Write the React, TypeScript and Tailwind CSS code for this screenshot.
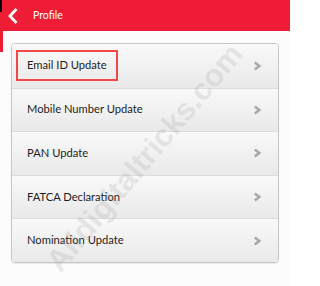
import React from "react";

const items = [
  "Email ID Update",
  "Mobile Number Update",
  "PAN Update",
  "FATCA Declaration",
  "Nomination Update",
];

function Chevron() {
  return (
    <svg width="9" height="10" viewBox="0 0 9 10" className="shrink-0">
      <path d="M1.8 1.5 L6.3 5 L1.8 8.5" fill="none" stroke="#a9a9a9" strokeWidth="2.6" strokeLinejoin="miter" />
    </svg>
  );
}

export default function App() {
  return (
    <div className="relative w-[290px] h-[286px] overflow-hidden bg-[#fcfcfc]" style={{ fontFamily: 'Lato, "Noto Sans", sans-serif' }}>
      {/* header */}
      <div className="relative h-[31px] bg-[#ee1c34] flex items-center">
        <div className="absolute left-0 top-0 w-[2px] h-[12px] bg-black" />
        <svg width="14" height="18" viewBox="0 0 14 18" className="ml-[6px]">
          <path d="M10.5 2 L4 9 L10.5 16" fill="none" stroke="#fff" strokeWidth="2.8" />
        </svg>
        <span className="ml-[13px] text-[10.5px] text-white leading-none">Profile</span>
      </div>
      <div className="absolute left-0 top-[31px] w-[3px] h-[21px] bg-[#ee1c34]" />

      {/* card */}
      <div className="mt-[12px] ml-[11px] w-[268px] rounded-[4px] border border-[#c6c6c6] overflow-hidden shadow-[0_1px_1px_rgba(0,0,0,0.08)]">
        {items.map((t, i) => (
          <div
            key={t}
            className={`h-[43.6px] flex items-center justify-between pl-[15px] pr-[16px] bg-gradient-to-b from-[#f9f9f9] to-[#e9e9e9] ${i > 0 ? "border-t border-[#dcdcdc]" : ""}`}
          >
            <span className="text-[11.2px] text-[#1e1e1e]">{t}</span>
            <Chevron />
          </div>
        ))}
      </div>

      {/* annotation box */}
      <div className="absolute left-[16px] top-[50px] w-[102px] h-[31px] border-2 border-[#f24747]" />

      {/* watermark */}
      <div className="absolute left-[145px] top-[158px] -translate-x-1/2 -translate-y-1/2 -rotate-[50deg] whitespace-nowrap text-[31px] font-bold text-[rgba(150,150,150,0.2)] pointer-events-none" style={{ fontFamily: '"Liberation Sans", sans-serif' }}>
        Alldigitaltricks.com
      </div>
    </div>
  );
}
